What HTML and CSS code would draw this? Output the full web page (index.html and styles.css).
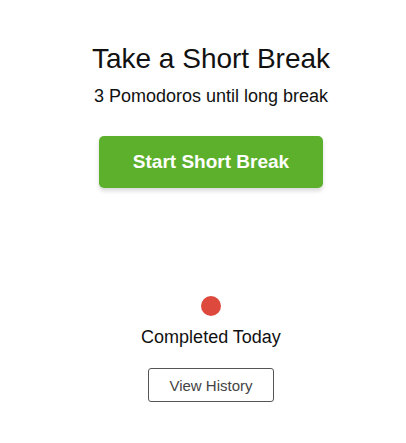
FILE: index.html
```html
<!DOCTYPE html>
<html>
<head>
<meta charset="utf-8">
<link rel="stylesheet" href="styles.css">
</head>
<body>
<main class="page">
  <h1 class="title">Take a Short Break</h1>
  <p class="subtitle">3 Pomodoros until long break</p>
  <button class="start">Start Short Break</button>
  <div class="done">
    <span class="dot"></span>
    <p class="done-label">Completed Today</p>
    <button class="history">View History</button>
  </div>
</main>
</body>
</html>
```
FILE: styles.css
```css
html, body {
  margin: 0;
  padding: 0;
  background: #fff;
}
body {
  font-family: "Liberation Sans", Arial, sans-serif;
  color: #111;
}
.page {
  display: flex;
  flex-direction: column;
  align-items: center;
  padding: 42px 0 0 16px;
}
.title {
  margin: 0;
  font-size: 28px;
  font-weight: normal;
  line-height: 34px;
}
.subtitle {
  margin: 9px 0 0;
  font-size: 18px;
  line-height: 22px;
}
.start {
  margin-top: 29px;
  width: 224px;
  height: 52px;
  border: none;
  border-radius: 5px;
  background: #5cb02b;
  color: #fff;
  font-family: inherit;
  font-size: 19px;
  font-weight: bold;
  box-shadow: 0 3px 4px rgba(0,0,0,0.15);
}
.done {
  display: flex;
  flex-direction: column;
  align-items: center;
  margin-top: 108px;
}
.dot {
  width: 20px;
  height: 20px;
  border-radius: 50%;
  background: #dd4a3d;
}
.done-label {
  margin: 10px 0 0;
  font-size: 18px;
  line-height: 22px;
}
.history {
  margin-top: 20px;
  width: 126px;
  height: 34px;
  border: 1px solid #555;
  border-radius: 3px;
  background: #fff;
  color: #444;
  font-family: inherit;
  font-size: 15px;
}
```
